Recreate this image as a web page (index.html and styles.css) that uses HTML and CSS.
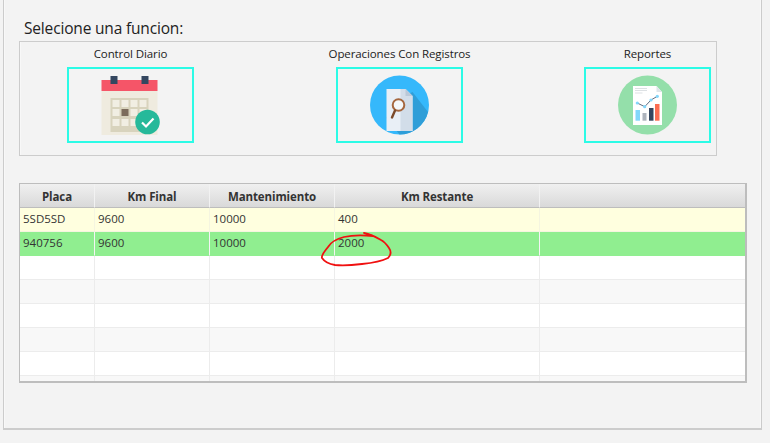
FILE: index.html
```html
<!DOCTYPE html>
<html lang="es">
<head>
<meta charset="utf-8">
<title>Selecione una funcion</title>
<link rel="stylesheet" href="styles.css">
</head>
<body>
<main class="panel">
  <h1 class="title">Selecione una funcion:</h1>
  <section class="group">
    <div class="action action-one">
      <span class="action-label">Control Diario</span>
      <button class="action-button" type="button" aria-label="Control Diario">
        <svg class="icon" viewBox="0.5 0 64 64" width="64" height="64">
          <rect x="3" y="18" width="56" height="44" fill="#efebdf"/>
          <rect x="3" y="7" width="56" height="11" fill="#f55568"/>
          <rect x="12" y="3" width="7" height="8" fill="#34465f"/>
          <rect x="43" y="3" width="7" height="8" fill="#34465f"/>
          <rect x="12" y="25" width="38" height="34" fill="#d8d3bd"/>
          <g fill="#f1eee3">
            <rect x="14" y="27" width="7" height="7"/><rect x="23" y="27" width="7" height="7"/><rect x="32" y="27" width="7" height="7"/><rect x="41" y="27" width="7" height="7"/>
            <rect x="14" y="36" width="7" height="7"/><rect x="32" y="36" width="7" height="7"/><rect x="41" y="36" width="7" height="7"/>
            <rect x="14" y="46" width="7" height="7"/><rect x="23" y="46" width="7" height="7"/><rect x="32" y="46" width="7" height="7"/>
          </g>
          <rect x="23" y="36" width="7" height="7" fill="#7c6c5c"/>
          <circle cx="49" cy="49" r="12.3" fill="#26b99a"/>
          <path d="M43.5 49.500l4 4 7.500-8" fill="none" stroke="#fff" stroke-width="2.2"/>
        </svg>
      </button>
    </div>
    <div class="action action-two">
      <span class="action-label">Operaciones Con Registros</span>
      <button class="action-button" type="button" aria-label="Operaciones Con Registros">
        <svg class="icon" viewBox="0.5 0 64 64" width="64" height="64">
          <circle cx="32" cy="32" r="29.5" fill="#35b8fb"/>
          <path d="M45 19L60.5 39A29.5 29.5 0 0 1 32 61.5L19 45L24 30Z" fill="#2f9ed8"/>
          <path d="M19 16H38L45 23V58H19Z" fill="#e9eff6"/>
          <path d="M33 16H38L45 23V58H33Z" fill="#d2dde9"/>
          <path d="M38 16L45 23H38Z" fill="#b9c8d8"/>
          <circle cx="31" cy="32" r="5.800" fill="#f4f8fb" stroke="#a5673f" stroke-width="2"/>
          <path d="M27.500 37.500L24.500 44.500" stroke="#7b4a2a" stroke-width="2.400" stroke-linecap="round"/>
        </svg>
      </button>
    </div>
    <div class="action action-three">
      <span class="action-label">Reportes</span>
      <button class="action-button" type="button" aria-label="Reportes">
        <svg class="icon" viewBox="0.5 0 64 64" width="64" height="64">
          <circle cx="32" cy="32" r="29.5" fill="#94dfaa"/>
          <path d="M17.500 13H41L46.500 19V52H17.500Z" fill="#fff"/>
          <path d="M41 13L46.500 19H41Z" fill="#dfe5ea"/>
          <path d="M19.500 15.500H31.500M19.500 17.500H31.500M19.500 20H27" stroke="#dde1e4" stroke-width="1"/>
          <rect x="20" y="37" width="4.500" height="10.700" fill="#83d7fb"/>
          <rect x="27" y="40" width="4" height="7.700" fill="#aeb4bd"/>
          <rect x="33.500" y="35" width="4.500" height="12.700" fill="#34465f"/>
          <rect x="39.500" y="31" width="4.500" height="16.700" fill="#fb6d52"/>
          <path d="M21.800 30L29.200 33.700L35.500 27L41.800 23.300" fill="none" stroke="#34465f" stroke-width="0.800"/>
          <g fill="#83d7fb"><circle cx="21.800" cy="30" r="1.600"/><circle cx="29.200" cy="33.700" r="1.600"/><circle cx="35.500" cy="27" r="1.600"/><circle cx="41.800" cy="23.300" r="1.600"/></g>
        </svg>
      </button>
    </div>
  </section>
  <section class="table-wrap">
    <table class="data">
      <colgroup><col class="c1"><col class="c2"><col class="c3"><col class="c4"><col></colgroup>
      <thead>
        <tr><th>Placa</th><th>Km Final</th><th>Mantenimiento</th><th>Km Restante</th><th></th></tr>
      </thead>
      <tbody>
        <tr class="warn"><td>5SD5SD</td><td>9600</td><td>10000</td><td>400</td><td></td></tr>
        <tr class="ok"><td>940756</td><td>9600</td><td>10000</td><td>2000</td><td></td></tr>
        <tr><td></td><td></td><td></td><td></td><td></td></tr>
        <tr class="odd"><td></td><td></td><td></td><td></td><td></td></tr>
        <tr><td></td><td></td><td></td><td></td><td></td></tr>
        <tr class="odd"><td></td><td></td><td></td><td></td><td></td></tr>
        <tr><td></td><td></td><td></td><td></td><td></td></tr>
        <tr class="odd"><td></td><td></td><td></td><td></td><td></td></tr>
      </tbody>
    </table>
    <svg class="scribble" viewBox="0 0 80 40" width="80" height="40">
      <path d="M56 8C46 7 35 7 27 9C19 11 14 14 11 19C8 23 4 27 5 30C7 33 12 36 18 37C27 38 37 37 45 36C55 35 65 33 71 30C74 27 74 23 72 20C70 17 68 14 64 12C59 9 53 6 47 5" fill="none" stroke="#f01010" stroke-width="1.8" stroke-linecap="round"/>
    </svg>
  </section>
</main>
</body>
</html>
```

FILE: styles.css
```css
* { box-sizing: border-box; }

html, body {
  margin: 0;
  height: 100%;
  background: #f3f3f3;
  overflow: hidden;
}

body {
  font-family: "Open Sans", "Noto Sans", "Liberation Sans", sans-serif;
  color: #222;
}

.panel {
  width: 759px;
  height: 430px;
  margin-left: 3px;
  padding: 18px 0 0 15px;
  border-left: 1px solid #ccc;
  border-right: 1px solid #ccc;
  border-bottom: 2px solid #ccc;
  box-shadow: inset 1px 0 0 #f8f8f8, inset -1px 0 0 #f8f8f8;
}

.title {
  margin: 0 0 0 5px;
  height: 23px;
  font-size: 15.5px;
  line-height: 21px;
  font-weight: 400;
  letter-spacing: -0.17px;
}

.group {
  display: flex;
  width: 698px;
  height: 115px;
  padding: 5px 0 0 47px;
  border: 1px solid #ccc;
  box-shadow: inset 1px 0 0 #f8f8f8;
}

.action {
  display: flex;
  flex-direction: column;
  align-items: center;
  width: 127px;
}

.action-two { margin-left: 142px; }
.action-three { margin-left: 121px; }

.action-label {
  height: 20px;
  font-size: 11.5px;
  line-height: 14px;
  white-space: nowrap;
  letter-spacing: -0.1px;
}

.action-button {
  display: flex;
  align-items: center;
  justify-content: center;
  flex: none;
  width: 127px;
  height: 76px;
  padding: 0;
  background: transparent;
  border: 2px solid #2bfbe6;
}

.icon { display: block; flex: none; }

.table-wrap {
  position: relative;
  width: 728px;
  height: 200px;
  margin-top: 27px;
  border: 1px solid #bdbdbd;
  border-bottom-width: 2px;
  border-right-width: 2px;
  overflow: hidden;
  background: #fff;
}

.data {
  width: 725px;
  table-layout: fixed;
  border-collapse: separate;
  border-spacing: 0;
  font-size: 11.5px;
}

.c1 { width: 75px; }
.c2 { width: 115px; }
.c3 { width: 125px; }
.c4 { width: 205px; }

.data th {
  height: 24px;
  padding: 2px 0 0;
  font-size: 11.5px;
  font-weight: 700;
  color: #333;
  letter-spacing: -0.1px;
  background: linear-gradient(#f0f0f0, #d9d9d9);
  border-right: 1px solid #f2f2f2;
  border-bottom: 1px solid #bdbdbd;
}

.data td {
  height: 24px;
  padding: 0 0 2px 3px;
  color: #333;
  border-right: 1px solid #ececec;
  border-bottom: 1px solid #ececec;
  white-space: nowrap;
}

.data th:last-child, .data td:last-child { border-right: 0; }

.odd td { background: #f8f8f8; }
.warn td { background: #ffffdf; border-color: #f5f5e0; }
.ok td { background: #90ee90; border-color: #f4f4f4; border-bottom-color: #90ee90; }

.scribble {
  position: absolute;
  left: 297px;
  top: 44px;
  pointer-events: none;
}
```
